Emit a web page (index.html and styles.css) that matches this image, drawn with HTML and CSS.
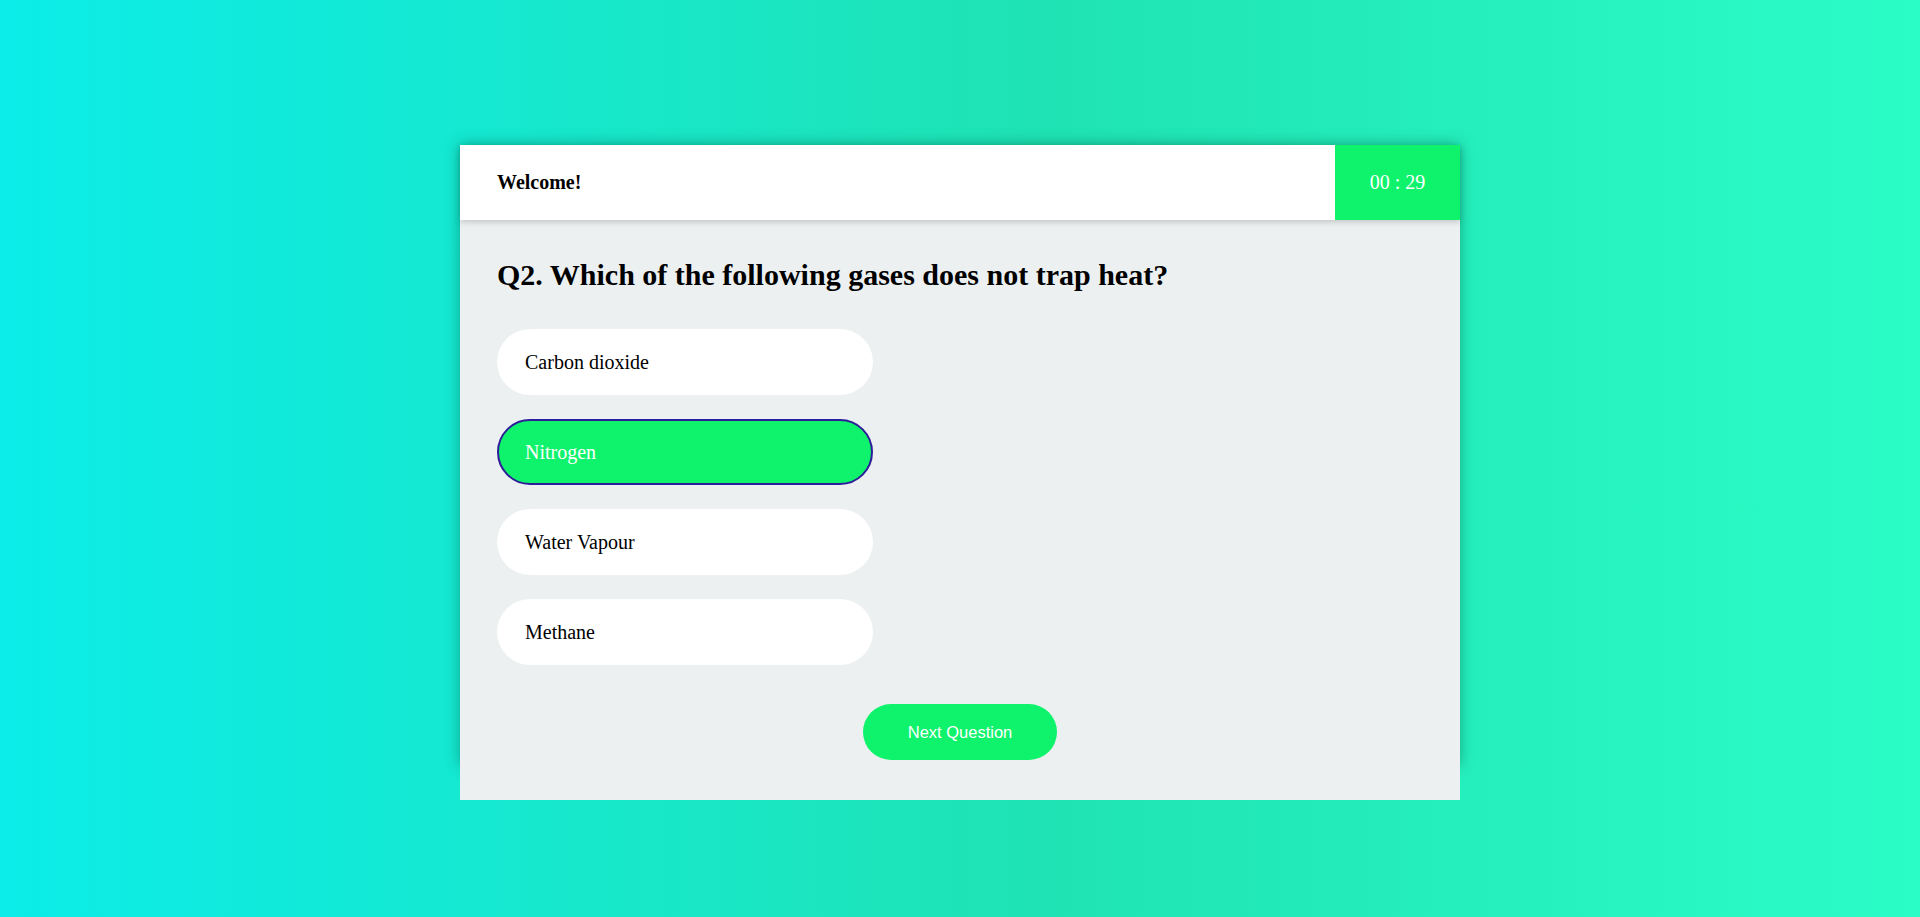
FILE: index.html
```html
<!DOCTYPE html>
<html>
<head>
<meta charset="utf-8">
<link rel="stylesheet" href="styles.css">
</head>
<body>
<div class="page">
  <div class="card">
    <div class="header">
      <div class="welcome">Welcome!</div>
      <div class="timer">00 : 29</div>
    </div>
    <div class="body">
      <h2 class="question">Q2. Which of the following gases does not trap heat?</h2>
      <div class="options">
        <div class="option">Carbon dioxide</div>
        <div class="option selected">Nitrogen</div>
        <div class="option">Water Vapour</div>
        <div class="option">Methane</div>
      </div>
      <div class="footer">
        <button class="next">Next Question</button>
      </div>
    </div>
  </div>
</div>
</body>
</html>
```

FILE: styles.css
```css
html, body {
  margin: 0;
  padding: 0;
  height: 100%;
}
body {
  background: linear-gradient(to right, #0cede9 0%, #1fe3b3 55%, #2bfdc7 100%);
  font-family: "Liberation Serif", "Times New Roman", serif;
}
.page {
  display: flex;
  justify-content: center;
  padding-top: 145px;
}
.card {
  width: 1000px;
  height: 620px;
  box-shadow: 0 0 14px rgba(0, 80, 60, 0.45);
}
.header {
  display: flex;
  height: 75px;
  background: #fff;
  position: relative;
  z-index: 1;
  box-shadow: 0 2px 6px rgba(0, 0, 0, 0.18);
}
.welcome {
  flex: 1;
  display: flex;
  align-items: center;
  padding-left: 37px;
  font-weight: bold;
  font-size: 20px;
  color: #000;
}
.timer {
  width: 125px;
  background: #0ef36b;
  color: #fff;
  font-size: 20px;
  display: flex;
  align-items: center;
  justify-content: center;
}
.body {
  background: #ecf0f1;
  padding: 37px 37px 40px;
}
.question {
  margin: 0;
  font-size: 30px;
  font-weight: bold;
  line-height: 36px;
  color: #000;
}
.options {
  display: flex;
  flex-direction: column;
  gap: 24px;
  margin-top: 36px;
}
.option {
  width: 376px;
  height: 66px;
  box-sizing: border-box;
  border-radius: 33px;
  background: #fff;
  display: flex;
  align-items: center;
  padding-left: 28px;
  font-size: 20px;
  color: #000;
}
.option.selected {
  background: #0ef36b;
  color: #fff;
  border: 2px solid #2e1d9a;
  padding-left: 26px;
}
.footer {
  display: flex;
  justify-content: center;
  margin-top: 39px;
}
.next {
  width: 194px;
  height: 56px;
  border: none;
  border-radius: 28px;
  background: #0ef36b;
  color: #fff;
  font-family: "Liberation Sans", Arial, sans-serif;
  font-size: 16.5px;
  cursor: pointer;
}
```
